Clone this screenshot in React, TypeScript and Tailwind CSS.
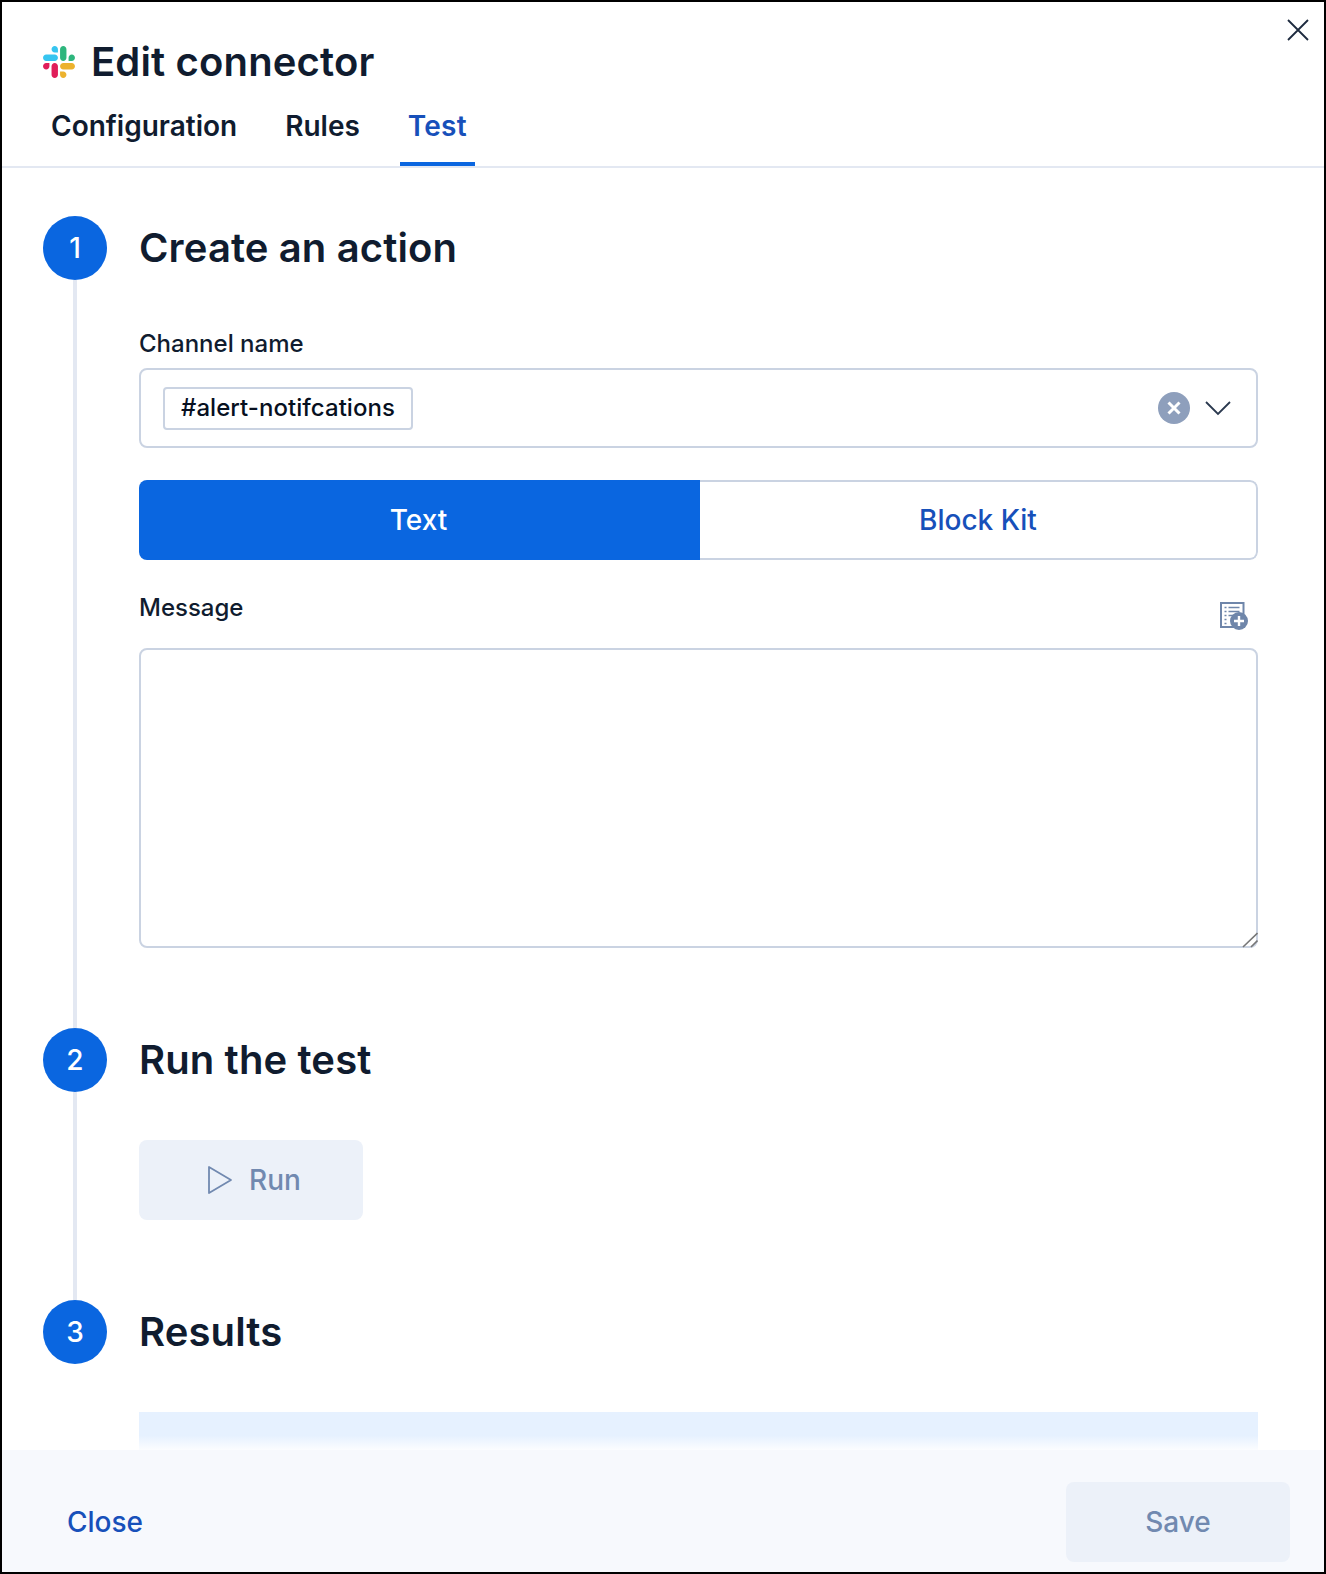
import React from 'react';

const SlackLogo = () => (
  <svg viewBox="0 0 2447.6 2452.5" className="w-8 h-8 shrink-0">
    <path d="m897.4 0c-135.3.1-244.8 109.9-244.7 245.2-.1 135.3 109.5 245.1 244.8 245.2h244.8v-245.1c.1-135.3-109.5-245.1-244.9-245.3.1 0 .1 0 0 0m0 654h-652.6c-135.3.1-244.9 109.9-244.8 245.2-.2 135.3 109.4 245.1 244.7 245.3h652.7c135.3-.1 244.9-109.9 244.8-245.2.1-135.4-109.5-245.2-244.8-245.3z" fill="#36c5f0" />
    <path d="m2447.6 899.2c.1-135.3-109.5-245.1-244.8-245.2-135.3.1-244.9 109.9-244.8 245.2v245.3h244.8c135.3-.1 244.9-109.9 244.8-245.3zm-652.7 0v-654c.1-135.2-109.4-245-244.7-245.2-135.3.1-244.9 109.9-244.8 245.2v654c-.2 135.3 109.4 245.1 244.7 245.3 135.3-.1 244.9-109.9 244.8-245.3z" fill="#2eb67d" />
    <path d="m1550.1 2452.5c135.3-.1 244.9-109.9 244.8-245.2.1-135.3-109.5-245.1-244.8-245.2h-244.8v245.2c-.1 135.2 109.5 245 244.8 245.2zm0-654.1h652.7c135.3-.1 244.9-109.9 244.8-245.2.2-135.3-109.4-245.1-244.7-245.3h-652.7c-135.3.1-244.9 109.9-244.8 245.2-.1 135.4 109.4 245.2 244.7 245.3z" fill="#ecb22e" />
    <path d="m0 1553.2c-.1 135.3 109.5 245.1 244.8 245.2 135.3-.1 244.9-109.9 244.8-245.2v-245.2h-244.8c-135.3.1-244.9 109.9-244.8 245.2zm652.7 0v654c-.2 135.3 109.4 245.1 244.7 245.3 135.3-.1 244.9-109.9 244.8-245.2v-653.9c.2-135.3-109.4-245.1-244.7-245.3-135.4 0-244.9 109.8-244.8 245.1z" fill="#e01e5a" />
  </svg>
);

const VariableIcon = () => (
  <svg viewBox="0 0 28 28" className="w-7 h-7">
    <rect x="1" y="1" width="22.5" height="24" fill="none" stroke="#6f86aa" strokeWidth="2" />
    <path d="M4.5 5.500h2M8.500 5.500h11M4.500 9.500h2M8.500 9.500h11M4.500 13.500h2M8.500 13.500h6M4.500 17.500h2M4.500 21.500h2" stroke="#6f86aa" strokeWidth="1.6" fill="none" />
    <circle cx="19" cy="19" r="9" fill="#6f86aa" />
    <path d="M19 14v10M14 19h10" stroke="#fff" strokeWidth="2.4" fill="none" />
  </svg>
);

function Step({ num, title, last, children }: { num: number; title: string; last?: boolean; children: React.ReactNode }) {
  return (
    <div className="flex gap-8">
      <div className="flex flex-col items-center w-16 shrink-0">
        <div className="w-16 h-16 rounded-full bg-[#0a66e0] text-white flex items-center justify-center text-[28px] font-medium">{num}</div>
        {!last && <div className="w-1 flex-1 bg-[#e3e8f2]" />}
      </div>
      <div className={`flex-1 min-w-0 ${last ? '' : 'pb-20'}`}>
        <h2 className="h-16 flex items-center text-[40px] font-semibold tracking-[0.12px] text-[#101c2f]">{title}</h2>
        {children}
      </div>
    </div>
  );
}

export default function App() {
  return (
    <div className="relative w-[1326px] h-[1574px] border-2 border-black bg-white flex flex-col overflow-hidden font-['Inter',sans-serif] text-[#101c2f]">
      <button className="absolute top-[16px] right-[14px] w-6 h-6">
        <svg viewBox="0 0 24 24" className="w-6 h-6" fill="none" stroke="#1d2a3e" strokeWidth="1.8">
          <path d="M2 2l20 20M22 2L2 22" />
        </svg>
      </button>

      <div className="h-[166px] shrink-0 border-b-2 border-[#e3e8f2] flex flex-col pl-[41px]">
        <div className="flex items-center gap-4 pt-[32px] h-[88px]">
          <SlackLogo />
          <h1 className="text-[40px] font-semibold tracking-[0.15px] leading-[48px]">Edit connector</h1>
        </div>
        <div className="flex gap-8 flex-1 items-stretch">
          <div className="px-2 pt-[16px] text-[28px] leading-[40px] font-semibold">Configuration</div>
          <div className="px-2 pt-[16px] text-[28px] leading-[40px] font-semibold">Rules</div>
          <div className="px-2 pt-[16px] text-[28px] leading-[40px] font-semibold tracking-[0.2px] text-[#1750ba] border-b-4 border-[#0a66e0]">Test</div>
        </div>
      </div>

      <div className="flex-1 min-h-0 overflow-hidden pt-[48px] pl-[41px] pr-[66px]">
        <Step num={1} title="Create an action">
          <label className="block mt-[50px] mb-[10px] text-[24px] leading-[28px] font-medium">Channel name</label>
          <div className="h-20 border-2 border-[#cad3e2] rounded-lg flex items-center pl-[22px] pr-[25px]">
            <span className="h-[43px] px-[16px] flex items-center border-2 border-[#cad3e2] rounded text-[24px] font-medium tracking-[0.05px] text-[#07101f]">#alert-notifcations</span>
            <span className="ml-auto w-8 h-8 rounded-full bg-[#8e9fbc] flex items-center justify-center">
              <svg viewBox="0 0 14 14" className="w-[14px] h-[14px]" fill="none" stroke="#fff" strokeWidth="3"><path d="M1.5 1.5l11 11M12.5 1.5l-11 11" /></svg>
            </span>
            <svg viewBox="0 0 26 16" className="w-[26px] h-4 ml-[15px]" fill="none" stroke="#2b394f" strokeWidth="1.8"><path d="M1 2l12 12L25 2" /></svg>
          </div>

          <div className="mt-8 h-20 flex rounded-lg overflow-hidden text-[28px] font-medium">
            <div className="w-[561px] shrink-0 pr-[2px] bg-[#0a66e0] text-white flex items-center justify-center">Text</div>
            <div className="flex-1 border-2 border-l-0 rounded-r-lg border-[#cad3e2] text-[#1750ba] flex items-center justify-center">Block Kit</div>
          </div>

          <div className="mt-8 h-14 flex justify-between items-start">
            <label className="text-[24px] leading-[32px] font-medium">Message</label>
            <div className="mt-[10px] mr-[10px]"><VariableIcon /></div>
          </div>
          <div className="relative">
            <textarea className="block w-full h-[300px] border-2 border-[#cad3e2] rounded-lg outline-none resize-none" />
            <svg viewBox="0 0 16 16" className="absolute right-0 bottom-0 w-4 h-4" fill="none" stroke="#777" strokeWidth="1.6">
              <path d="M1 15L15.500 1M9 15l6.500-6.500" />
            </svg>
          </div>
        </Step>

        <Step num={2} title="Run the test">
          <button className="mt-12 w-[224px] h-20 pl-[6px] rounded-lg bg-[#ecf1f9] text-[#7189b0] text-[28px] font-medium flex items-center justify-center gap-4">
            <svg viewBox="0 0 26 30" className="w-[26px] h-[30px]" fill="none" stroke="#7189b0" strokeWidth="1.8" strokeLinejoin="round"><path d="M2 2v26l22-13z" /></svg>
            Run
          </button>
        </Step>

        <Step num={3} title="Results" last>
          <div className="mt-12 h-[38px] bg-linear-to-b from-[#e6f1ff] from-[62%] to-[#fcfdff]" />
        </Step>
      </div>

      <div className="h-[122px] shrink-0 bg-[#f7f9fd] flex items-start justify-between pl-[65px] pr-[34px] pt-[32px]">
        <button className="h-20 text-[28px] font-medium text-[#1750ba]">Close</button>
        <button className="w-[224px] h-20 rounded-lg bg-[#ecf1f9] text-[28px] font-medium text-[#7189b0]">Save</button>
      </div>
    </div>
  );
}
